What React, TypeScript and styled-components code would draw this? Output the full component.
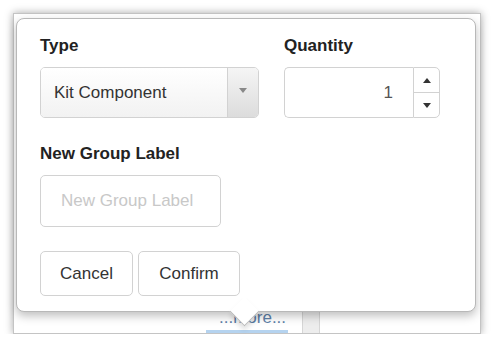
import React from "react";
import styled, { createGlobalStyle } from "styled-components";

const GlobalStyle = createGlobalStyle`
  html, body { margin: 0; padding: 0; background: #fff; }
  body { font-family: "Liberation Sans", Arial, sans-serif; }
  * { box-sizing: border-box; }
`;

const Page = styled.div`
  padding: 13px 0 0 13px;
`;

const Frame = styled.div`
  width: 468px;
  height: 321px;
  border: 1px solid #c4c4c4;
  background: #fff;
  box-shadow: 0 0 8px rgba(0, 0, 0, 0.35);
  display: flex;
  flex-direction: column;
`;

const Popover = styled.div`
  position: relative;
  z-index: 1;
  margin: 4px 0 0 2px;
  width: 460px;
  height: 294px;
  flex: none;
  border: 1px solid #b8b8b8;
  border-radius: 8px;
  background: #fff;
  box-shadow: 0 4px 10px rgba(0, 0, 0, 0.25);
  padding: 17px 0 0 23px;
  display: flex;
  flex-direction: column;
`;

const Arrow = styled.div`
  position: absolute;
  left: 217px;
  bottom: -11px;
  width: 21px;
  height: 21px;
  background: #fff;
  border-right: 1px solid #b8b8b8;
  border-bottom: 1px solid #b8b8b8;
  transform: rotate(45deg);
  box-shadow: 3px 3px 5px rgba(0, 0, 0, 0.12);
`;

const Row = styled.div<{ $mt?: number; $gap?: number }>`
  display: flex;
  gap: ${(p) => p.$gap ?? 25}px;
  margin-top: ${(p) => p.$mt ?? 0}px;
`;

const Field = styled.div<{ $w: number }>`
  display: flex;
  flex-direction: column;
  gap: 11px;
  width: ${(p) => p.$w}px;
`;

const Label = styled.div`
  font-weight: 700;
  font-size: 17px;
  line-height: 20px;
  color: #222;
`;

const Select = styled.div`
  height: 51px;
  border: 1px solid #d2d2d2;
  border-radius: 5px;
  display: flex;
  overflow: hidden;
`;

const SelectValue = styled.div`
  flex: 1;
  display: flex;
  align-items: center;
  padding-left: 13px;
  font-size: 17px;
  color: #333;
  background: linear-gradient(#ffffff, #f2f2f2);
`;

const SelectButton = styled.div`
  width: 31px;
  border-left: 1px solid #d2d2d2;
  background: linear-gradient(#f5f5f5, #dcdcdc);
  display: flex;
  align-items: center;
  justify-content: center;
  padding-bottom: 4px;
`;

const Triangle = styled.span<{ $dir: "up" | "down"; $color: string }>`
  width: 0;
  height: 0;
  border-left: 4px solid transparent;
  border-right: 4px solid transparent;
  ${(p) =>
    p.$dir === "down"
      ? `border-top: 5px solid ${p.$color};`
      : `border-bottom: 5px solid ${p.$color};`}
`;

const Qty = styled.div`
  display: flex;
  height: 51px;
`;

const QtyValue = styled.div`
  width: 129px;
  border: 1px solid #d2d2d2;
  border-right: none;
  border-radius: 5px 0 0 5px;
  display: flex;
  align-items: center;
  justify-content: flex-end;
  padding-right: 20px;
  font-size: 17px;
  color: #555;
`;

const Spinner = styled.div`
  width: 27px;
  border: 1px solid #d2d2d2;
  border-radius: 0 5px 5px 0;
  display: flex;
  flex-direction: column;
`;

const SpinHalf = styled.div<{ $sep?: boolean }>`
  flex: 1;
  display: flex;
  align-items: center;
  justify-content: center;
  ${(p) => (p.$sep ? "border-top: 1px solid #d2d2d2;" : "")}
`;

const TextInput = styled.input`
  width: 181px;
  height: 52px;
  border: 1px solid #d2d2d2;
  border-radius: 5px;
  padding: 0 0 0 20px;
  font-family: "Liberation Sans", Arial, sans-serif;
  font-size: 17px;
  color: #333;
  outline: none;
  &::placeholder { color: #c8c8c8; }
`;

const Button = styled.button<{ $w: number }>`
  width: ${(p) => p.$w}px;
  height: 45px;
  border: 1px solid #d2d2d2;
  border-radius: 5px;
  background: #fff;
  font-family: "Liberation Sans", Arial, sans-serif;
  font-size: 17px;
  color: #333;
  padding: 0;
`;

const Strip = styled.div`
  flex: 1;
  display: flex;
  background: #fff;
`;

const MoreLink = styled.div`
  margin-left: 192px;
  width: 82px;
  padding: 0 0 6px 13px;
  font-size: 17px;
  line-height: 12px;
  color: #5d80a8;
  border-bottom: 3px solid #b5d3ef;
  white-space: nowrap;
`;

const Column = styled.div`
  margin-left: 14px;
  width: 18px;
  background: #ededed;
  border-left: 1px solid #d6d6d6;
  border-right: 1px solid #d6d6d6;
`;

export default function App() {
  return (
    <>
      <GlobalStyle />
      <Page>
        <Frame>
          <Popover>
            <Row>
              <Field $w={219}>
                <Label>Type</Label>
                <Select>
                  <SelectValue>Kit Component</SelectValue>
                  <SelectButton>
                    <Triangle $dir="down" $color="#888" />
                  </SelectButton>
                </Select>
              </Field>
              <Field $w={156}>
                <Label>Quantity</Label>
                <Qty>
                  <QtyValue>1</QtyValue>
                  <Spinner>
                    <SpinHalf>
                      <Triangle $dir="up" $color="#333" />
                    </SpinHalf>
                    <SpinHalf $sep>
                      <Triangle $dir="down" $color="#333" />
                    </SpinHalf>
                  </Spinner>
                </Qty>
              </Field>
            </Row>
            <Row $mt={26}>
              <Field $w={181}>
                <Label>New Group Label</Label>
                <TextInput placeholder="New Group Label" />
              </Field>
            </Row>
            <Row $mt={24} $gap={5}>
              <Button $w={93}>Cancel</Button>
              <Button $w={102}>Confirm</Button>
            </Row>
            <Arrow />
          </Popover>
          <Strip>
            <MoreLink>...more...</MoreLink>
            <Column />
          </Strip>
        </Frame>
      </Page>
    </>
  );
}
